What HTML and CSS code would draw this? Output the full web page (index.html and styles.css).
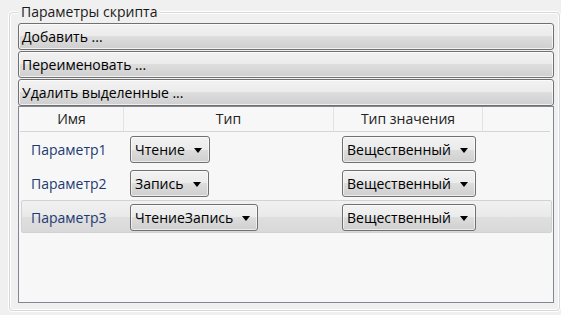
FILE: index.html
```html
<!DOCTYPE html>
<html lang="ru">
<head>
<meta charset="utf-8">
<title>Параметры скрипта</title>
<link rel="stylesheet" href="styles.css">
</head>
<body>
<section class="group">
  <div class="group-title">Параметры скрипта</div>
  <button class="btn">Добавить ...</button>
  <button class="btn">Переименовать ...</button>
  <button class="btn btn-last">Удалить выделенные ...</button>
  <div class="table">
    <div class="thead">
      <div class="th">Имя</div>
      <div class="th">Тип</div>
      <div class="th">Тип значения</div>
      <div class="th th-rest"></div>
    </div>
    <div class="row">
      <div class="name">Параметр1</div>
      <div class="cell-type"><span class="combo">Чтение<i class="arrow"></i></span></div>
      <div class="cell-value"><span class="combo">Вещественный<i class="arrow"></i></span></div>
    </div>
    <div class="row">
      <div class="name">Параметр2</div>
      <div class="cell-type"><span class="combo">Запись<i class="arrow"></i></span></div>
      <div class="cell-value"><span class="combo">Вещественный<i class="arrow"></i></span></div>
    </div>
    <div class="row row-selected">
      <div class="name">Параметр3</div>
      <div class="cell-type"><span class="combo">ЧтениеЗапись<i class="arrow"></i></span></div>
      <div class="cell-value"><span class="combo">Вещественный<i class="arrow"></i></span></div>
    </div>
  </div>
</section>
</body>
</html>
```

FILE: styles.css
```css
html, body {
  margin: 0;
  padding: 0;
  background: #f0f0f0;
  font-family: "Open Sans", "Noto Sans", "Liberation Sans", sans-serif;
  font-size: 14px;
  color: #111;
  width: 561px;
  height: 315px;
  overflow: hidden;
}

.group {
  position: relative;
  margin: 12px 1px 0 9px;
  padding: 10px 5px 7px 8px;
  border: 1px solid #d3d8dc;
  border-radius: 4px;
  box-shadow: inset 0 0 0 1px #ffffff, 0 0 0 1px #ffffff;
}

.group-title {
  position: absolute;
  left: 8px;
  top: -10px;
  padding: 0 3px;
  height: 18px;
  line-height: 18px;
  background: #f0f0f0;
  color: #1a1a1a;
}

.btn {
  display: block;
  width: 100%;
  height: 27px;
  margin: 0 0 1px 0;
  padding: 0 3px;
  text-align: left;
  font-family: inherit;
  font-size: 14px;
  line-height: 23px;
  color: #000;
  border: 1px solid #707070;
  border-radius: 3px;
  background: linear-gradient(#f2f2f2 0%, #ebebeb 50%, #dddddd 50%, #cfcfcf 100%);
  box-shadow: inset 0 0 0 1px rgba(255,255,255,0.7);
}

.btn-last {
  margin-bottom: 0;
}

.table {
  box-sizing: border-box;
  height: 197px;
  border: 1px solid #828790;
  background: #f7f7f7;
}

.thead {
  display: grid;
  grid-template-columns: 104px 210px 149px 1fr;
  height: 24px;
  margin: 0 3px 0 1px;
  border-bottom: 1px solid #d5d5d5;
}

.th {
  text-align: center;
  line-height: 24px;
  color: #222;
  border-right: 1px solid #e3e3e3;
}

.th-rest {
  border-right: none;
}

.row {
  display: grid;
  grid-template-columns: 101px 210px 1fr;
  box-sizing: border-box;
  height: 33px;
  margin: 0 1px 1px 2px;
  padding-top: 3px;
  border: 1px solid transparent;
  border-radius: 2px;
}

.row-selected {
  border-color: #d2d2d2;
  background: linear-gradient(#f1f1f1 0%, #e9e9e9 50%, #dfdfdf 51%, #d9d9d9 100%);
}

.name {
  padding-left: 9px;
  line-height: 27px;
  color: #1c3a73;
}

.cell-type {
  padding-left: 7px;
}

.cell-value {
  padding-left: 9px;
}

.combo {
  display: inline-flex;
  align-items: center;
  box-sizing: border-box;
  height: 27px;
  padding: 0 7px 0 4px;
  border: 1px solid #707070;
  border-radius: 3px;
  background: linear-gradient(#f2f2f2 0%, #ebebeb 50%, #dddddd 50%, #cfcfcf 100%);
  box-shadow: inset 0 0 0 1px rgba(255,255,255,0.6);
  color: #000;
  line-height: 25px;
}

.arrow {
  display: inline-block;
  width: 0;
  height: 0;
  margin-left: 9px;
  margin-top: 1px;
  border-top: 5px solid #000;
  border-left: 4px solid transparent;
  border-right: 4px solid transparent;
}
```
